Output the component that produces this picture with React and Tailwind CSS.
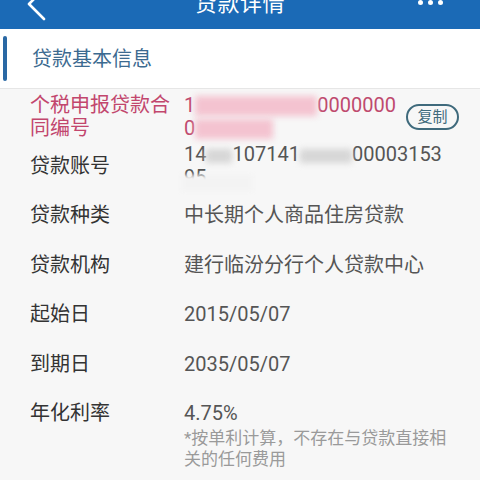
const FONT = { fontFamily: 'Roboto, "Noto Sans CJK SC", "Noto Sans", sans-serif' }

function Blur({ w, tone = 'pink', h = 'h-[20px]' }) {
  const bg = tone === 'pink' ? 'bg-[#f4c3d0]' : 'bg-[#d6d6d6]'
  return <span className={`inline-block align-middle ${w} ${h} ${bg} blur-[3px]`} />
}

function Row({ label, children, pink, right }) {
  return (
    <div className="flex h-[49.5px] items-center">
      <div className={`w-[154px] shrink-0 text-[20px] leading-[23px] ${pink ? 'text-[#c2466d]' : 'text-[#333333]'}`}>
        {label}
      </div>
      <div className={`min-w-0 flex-1 text-[20px] leading-[23px] ${pink ? 'text-[#bf4a6e]' : 'text-[#555555]'}`}>
        {children}
      </div>
      {right}
    </div>
  )
}

export default function App() {
  return (
    <div className="h-[480px] overflow-hidden bg-[#f7f7f7]" style={FONT}>
      {/* title bar, page scrolled up a little */}
      <div className="-mt-[27px] flex h-[56px] items-center bg-[#1b6ab6] pt-[6px] text-white">
        <div className="w-[120px] pl-[26px]">
          <svg width="22" height="34" viewBox="0 0 22 34" fill="none" stroke="white" strokeWidth="2.6" strokeLinecap="round" strokeLinejoin="round">
            <path d="M18 2 L3 17 L18 32" />
          </svg>
        </div>
        <div className="flex-1 text-center text-[22px] leading-none tracking-[0.5px]">贷款详情</div>
        <div className="-mt-[3px] flex w-[120px] justify-end gap-[5px] pr-[37px]">
          <span className="h-[5px] w-[5px] rounded-full bg-white" />
          <span className="h-[5px] w-[5px] rounded-full bg-white" />
          <span className="h-[5px] w-[5px] rounded-full bg-white" />
        </div>
      </div>

      {/* section header */}
      <div className="flex h-[60px] items-center border-b border-[#e6e6e6] bg-white">
        <div className="ml-[3px] h-[45px] w-[4px] rounded-full bg-[#2a68a4]" />
        <div className="ml-[25px] text-[20px] text-[#3c6a90]">贷款基本信息</div>
      </div>

      <div className="pl-[30px] pr-[21px] pt-[3px]">
        <Row
          pink
          label="个税申报贷款合同编号"
          right={
            <div className="ml-[6px] flex h-[26px] w-[53px] shrink-0 items-center justify-center rounded-full border-2 border-[#3f6a7c] text-[15px] text-[#3f6a7c]">
              复制
            </div>
          }
        >
          <div className="whitespace-nowrap">1<Blur w="w-[122px]" />0000000</div>
          <div className="whitespace-nowrap">0<Blur w="w-[78px]" /></div>
        </Row>

        <Row label="贷款账号">
          <div className="whitespace-nowrap">14<Blur w="w-[26px]" tone="gray" h="h-[14px]" />107141<Blur w="w-[52px]" tone="gray" h="h-[14px]" />00003153</div>
          <div className="relative whitespace-nowrap">
            95
            <span className="absolute left-[-2px] top-[9px] h-[16px] w-[70px] bg-[#f3f3f3] blur-[2px]" />
          </div>
        </Row>

        <Row label="贷款种类">中长期个人商品住房贷款</Row>
        <Row label="贷款机构">建行临汾分行个人贷款中心</Row>
        <Row label="起始日">2015/05/07</Row>
        <Row label="到期日">2035/05/07</Row>

        <div className="flex items-start pt-[13px]">
          <div className="w-[154px] shrink-0 text-[20px] leading-[23px] text-[#333333]">年化利率</div>
          <div className="min-w-0 flex-1">
            <div className="text-[20px] leading-[23px] text-[#555555]">4.75%</div>
            <div className="mt-[3px] text-[17px] leading-[21px] text-[#9a9a9a]">
              *按单利计算，不存在与贷款直接相<br />关的任何费用
            </div>
          </div>
        </div>
      </div>
    </div>
  )
}
